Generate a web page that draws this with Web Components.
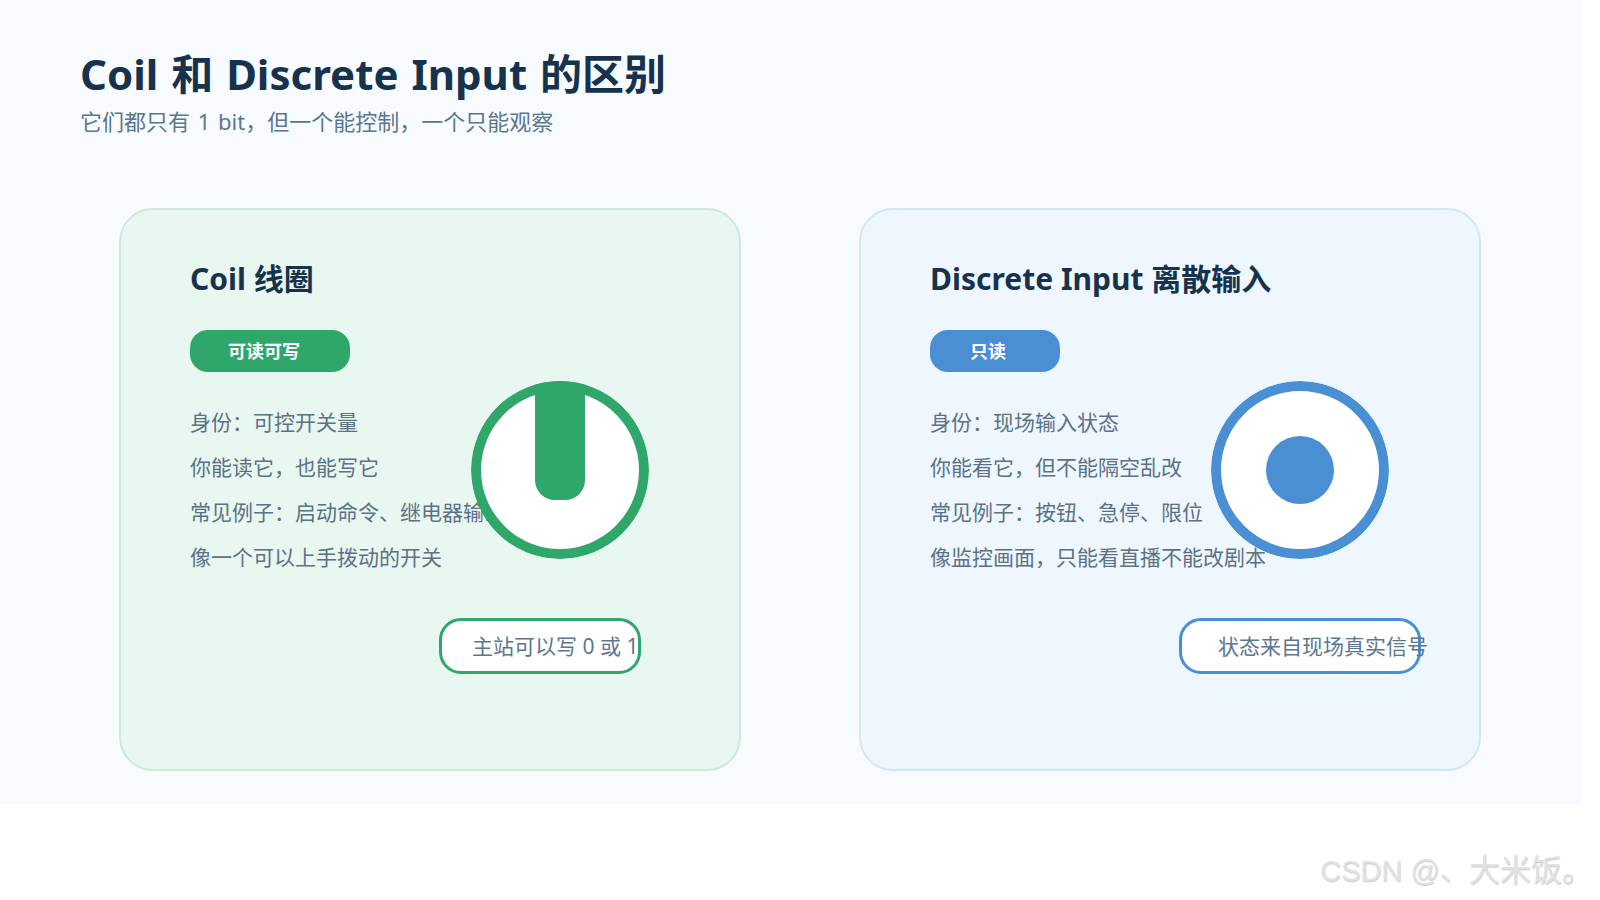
<!doctype html>
<html lang="zh-CN"><head><meta charset="utf-8">
<style>
html,body{margin:0;padding:0;background:#fff;}
body{font-family:"Noto Sans","Noto Sans CJK SC",sans-serif;width:1600px;height:900px;overflow:hidden;}
</style></head><body>
<template id="t-slide"><style>
:host{display:block;box-sizing:border-box;width:1582px;height:804px;background:#f7fbff;padding:44px 0 0 80px;}
.row{display:flex;gap:118px;margin:71px 0 0 39px;}
h1{margin:0;font-size:42px;line-height:60px;font-weight:700;color:#17324d;word-spacing:2px;}
p{margin:0;font-size:22px;line-height:32px;color:#5a7690;margin-top:1px;word-spacing:2px;}
</style><h1><slot name="title"></slot></h1><p><slot name="sub"></slot></p><div class="row"><slot></slot></div></template>

<template id="t-card"><style>
:host{display:block;position:relative;box-sizing:border-box;width:622px;height:563px;border:2px solid var(--line);border-radius:34px;background:var(--bg);padding:47px 0 0 69px;}
h2{margin:0;font-size:30px;line-height:44px;font-weight:700;color:#17324d;}
.list{margin-top:28px;font-size:21px;line-height:45px;color:#5b7186;}
</style><h2><slot name="heading"></slot></h2><slot name="badge"></slot><div class="list"><slot></slot></div><slot name="dial"></slot><slot name="pill"></slot></template>

<template id="t-badge"><style>
:host{display:block;box-sizing:border-box;width:var(--w);height:42px;margin-top:29px;border-radius:18px;background:var(--c);color:#fff;font-size:18px;font-weight:700;line-height:42px;padding-left:var(--p);}
</style><slot></slot></template>

<template id="t-dial"><style>
:host{display:block;position:absolute;top:171px;left:var(--l);box-sizing:border-box;width:178px;height:178px;border:10px solid var(--c);border-radius:50%;background:#fff;clip-path:circle(50%);}
.bar{position:absolute;left:54px;top:-10px;width:50px;height:119px;border-radius:0 0 20px 20px;background:var(--c);}
.dot{position:absolute;left:45px;top:45px;width:68px;height:68px;border-radius:50%;background:var(--c);}
</style><div class="mark"></div></template>

<template id="t-pill"><style>
:host{display:block;position:absolute;top:408px;left:var(--l);box-sizing:border-box;width:var(--w);height:56px;border:3px solid var(--c);border-radius:22px;background:#fff;padding-left:var(--p);font-size:21px;line-height:50px;color:#5a7690;white-space:nowrap;}
</style><slot></slot></template>

<template id="t-mark"><style>
:host{display:block;text-align:right;padding:42px 7px 0 0;font-family:"Liberation Sans","Noto Sans CJK SC",sans-serif;font-size:29px;line-height:50px;color:#e2e2e2;text-shadow:.5px .5px 1px rgba(0,0,0,.22);}
span{font-size:31px;}
</style><slot></slot><span><slot name="cjk"></slot></span></template>

<cc-slide>
  <span slot="title">Coil 和 Discrete Input 的区别</span>
  <span slot="sub">它们都只有 1 bit，但一个能控制，一个只能观察</span>
  <cc-card style="--bg:#e8f7ef;--line:#d0e8dc">
    <span slot="heading">Coil 线圈</span>
    <cc-badge slot="badge" style="--w:160px;--c:#2fa66a;--p:38px">可读可写</cc-badge>
    <div>身份：可控开关量</div><div>你能读它，也能写它</div><div>常见例子：启动命令、继电器输出</div><div>像一个可以上手拨动的开关</div>
    <cc-dial slot="dial" kind="bar" style="--c:#2fa66a;--l:350px"></cc-dial>
    <cc-pill slot="pill" style="--c:#2fa66a;--l:318px;--w:202px;--p:30px">主站可以写 0 或 1</cc-pill>
  </cc-card>
  <cc-card style="--bg:#eef7ff;--line:#d2e6f5">
    <span slot="heading">Discrete Input 离散输入</span>
    <cc-badge slot="badge" style="--w:130px;--c:#4a8fd3;--p:40px">只读</cc-badge>
    <div>身份：现场输入状态</div><div>你能看它，但不能隔空乱改</div><div>常见例子：按钮、急停、限位</div><div>像监控画面，只能看直播不能改剧本</div>
    <cc-dial slot="dial" kind="dot" style="--c:#4a8fd3;--l:350px"></cc-dial>
    <cc-pill slot="pill" style="--c:#4a8fd3;--l:318px;--w:242px;--p:36px">状态来自现场真实信号</cc-pill>
  </cc-card>
</cc-slide>
<cc-mark>CSDN @、<span slot="cjk">大米饭。</span></cc-mark>
<script>
function def(name,tid,init){customElements.define(name,class extends HTMLElement{constructor(){super();const r=this.attachShadow({mode:"open"});r.appendChild(document.getElementById(tid).content.cloneNode(true));}connectedCallback(){if(init)init(this);}});}
def("cc-slide","t-slide");def("cc-card","t-card");def("cc-badge","t-badge");def("cc-pill","t-pill");def("cc-mark","t-mark");
def("cc-dial","t-dial",el=>{el.shadowRoot.querySelector(".mark").className=el.getAttribute("kind");});
</script>
</body></html>
